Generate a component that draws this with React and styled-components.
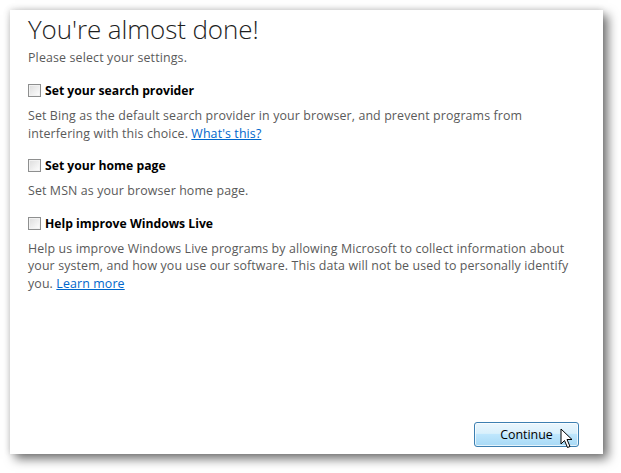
import React from "react";
import styled, { createGlobalStyle } from "styled-components";

const Global = createGlobalStyle`
  html, body {
    margin: 0;
    padding: 0;
    background: #ffffff;
  }
`;

const Page = styled.div`
  width: 621px;
  height: 473px;
  padding: 10px 0 0 10px;
  box-sizing: border-box;
`;

const Panel = styled.div`
  position: relative;
  width: 593px;
  height: 444px;
  background: #ffffff;
  box-shadow: 5px 5px 10px rgba(0, 0, 0, 0.55), -1px -1px 6px rgba(0, 0, 0, 0.12);
  padding: 2px 18px 0 18px;
  box-sizing: border-box;
  font-family: "Open Sans", "Noto Sans", sans-serif;
  display: flex;
  flex-direction: column;
`;

const Title = styled.h1`
  margin: 0;
  font-family: "Open Sans", sans-serif;
  font-weight: 300;
  font-size: 26px;
  line-height: 34px;
  color: #1e1e1e;
  letter-spacing: -0.1px;
`;

const Intro = styled.p`
  margin: 3px 0 0 0;
  font-size: 12.4px;
  line-height: 17px;
  color: #5a5a5a;
  letter-spacing: 0.15px;
`;

const Option = styled.section`
  margin-top: ${(p) => p.gap}px;
`;

const Heading = styled.label`
  display: flex;
  align-items: center;
  gap: 4px;
  font-family: "Open Sans", sans-serif;
  font-weight: 700;
  font-size: 12.2px;
  line-height: 17px;
  color: #000000;
`;

const Box = styled.span`
  width: 11px;
  height: 11px;
  border: 1px solid #8e8f8f;
  background: linear-gradient(135deg, #dcdcdc 0%, #f4f4f4 70%, #ffffff 100%);
  box-shadow: inset 0 0 0 1px #f2f2f2;
  flex: none;
`;

const Desc = styled.p`
  margin: 8px 0 0 0;
  font-size: 12.4px;
  line-height: 17.5px;
  color: #5a5a5a;
  letter-spacing: 0.12px;
`;

const Link = styled.a`
  color: #0066cc;
  text-decoration: underline;
`;

const Footer = styled.div`
  margin-top: auto;
  display: flex;
  justify-content: flex-end;
  padding: 0 6px 7px 0;
`;

const Button = styled.button`
  position: relative;
  width: 105px;
  height: 25px;
  border: 1px solid #3c7fb1;
  border-radius: 3px;
  background: linear-gradient(
    to bottom,
    #eaf6fd 0%,
    #d9f0fc 45%,
    #bee6fd 50%,
    #a7d9f5 100%
  );
  box-shadow: inset 0 0 0 1px rgba(255, 255, 255, 0.7);
  font-family: "Open Sans", sans-serif;
  font-size: 12.4px;
  color: #000000;
  padding: 0;
`;

const Cursor = styled.svg`
  position: absolute;
  left: 85px;
  top: 5px;
`;

function Check({ children }) {
  return (
    <Heading>
      <Box />
      {children}
    </Heading>
  );
}

export default function App() {
  return (
    <>
      <Global />
      <Page>
        <Panel>
          <Title>You're almost done!</Title>
          <Intro>Please select your settings.</Intro>
          <Option gap={16}>
            <Check>Set your search provider</Check>
            <Desc>
              Set Bing as the default search provider in your browser, and prevent programs from
              <br />
              interfering with this choice. <Link href="#">What's this?</Link>
            </Desc>
          </Option>
          <Option gap={15}>
            <Check>Set your home page</Check>
            <Desc>Set MSN as your browser home page.</Desc>
          </Option>
          <Option gap={15}>
            <Check>Help improve Windows Live</Check>
            <Desc>
              Help us improve Windows Live programs by allowing Microsoft to collect information about
              <br />
              your system, and how you use our software. This data will not be used to personally identify
              <br />
              you. <Link href="#">Learn more</Link>
            </Desc>
          </Option>
          <Footer>
            <Button>
              Continue
              <Cursor width="14" height="21" viewBox="0 0 14 21">
                <path
                  d="M1 1 L1 16 L4.5 12.5 L7.5 19.5 L10 18.5 L7 11.5 L12 11.5 Z"
                  fill="#ffffff"
                  stroke="#000000"
                  strokeWidth="1"
                  strokeLinejoin="miter"
                />
              </Cursor>
            </Button>
          </Footer>
        </Panel>
      </Page>
    </>
  );
}
